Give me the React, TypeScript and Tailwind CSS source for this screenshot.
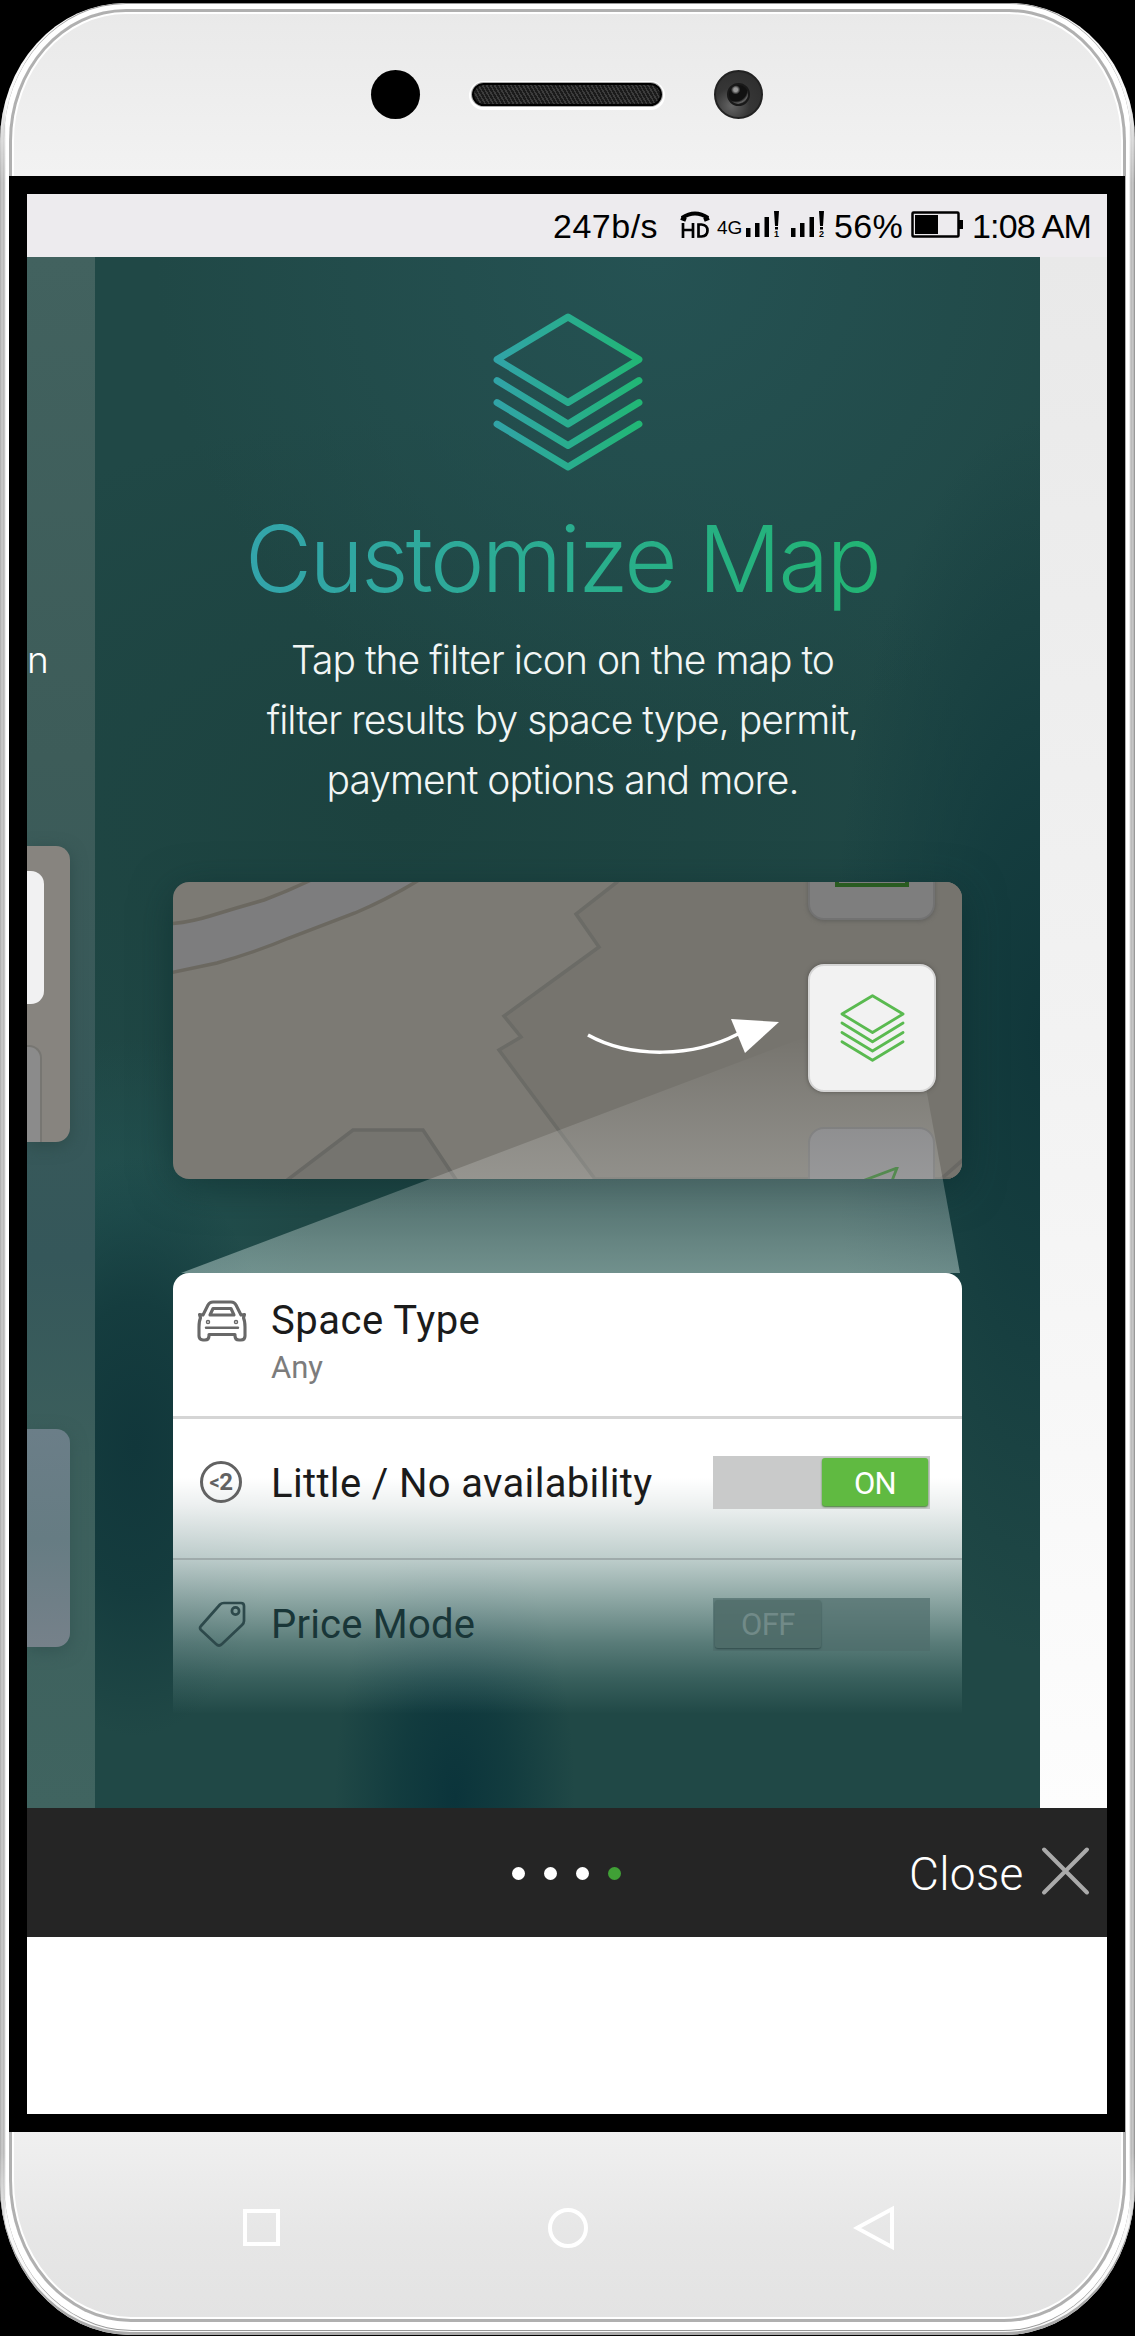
import React from "react";

function LayersIcon({ className, stroke, width }: { className: string; stroke: string; width: number }) {
  return (
    <svg className={className} viewBox="0 0 150 158" fill="none" stroke={stroke} strokeWidth={width} strokeLinecap="round" strokeLinejoin="round">
      <defs>
        <linearGradient id="layers" gradientUnits="userSpaceOnUse" x1="0" y1="0" x2="150" y2="0">
          <stop offset="0" stopColor="#31a3a8" />
          <stop offset="1" stopColor="#21b774" />
        </linearGradient>
      </defs>
      <path d="M75 4 146 46.500 75 89.500 4 46.500Z" />
      <path d="M4 67.500 75 111 146 67.500M4 89.500 75 132.500 146 89.500M4 111 75 154 146 111" />
    </svg>
  );
}

function CarIcon() {
  return (
    <svg className="h-[42px] w-[50px]" viewBox="0 0 50 42" fill="none" stroke="#686868" strokeWidth="3.100" strokeLinejoin="round" strokeLinecap="round">
      <path d="M6 15 11 5Q12.500 2 16 2H34Q37.500 2 39 5L44 15 47.500 14.500 46.500 18Q48 21 48 27V36Q48 40 44 40H42Q38 40 38 36V34.500H12V36Q12 40 8 40H6Q2 40 2 36V27Q2 21 3.500 18L2.500 14.500Z" />
      <path d="M13 15 16 8.500H34L37 15Z" />
      <path d="M9 27.800H41" strokeWidth="2.400" />
      <circle cx="11" cy="22" r=".7" />
      <circle cx="39" cy="22" r=".7" />
    </svg>
  );
}

function TagIcon() {
  return (
    <svg className="h-[46px] w-[48px]" viewBox="0 0 48 46" fill="none" stroke="#2d494b" strokeWidth="2.700" strokeLinejoin="round">
      <path d="M26 2H43Q46 2 46 5V20Q46 22 44 24L24 43Q21 46 18 43L3 29Q1 27 3 25L22 3.500Q23.500 2 26 2Z" />
      <circle cx="37.500" cy="10" r="3.600" />
    </svg>
  );
}

function Signal({ sim }: { sim: string }) {
  return (
    <span className="relative block h-[27px] w-[33px]">
      <svg className="h-[27px] w-[33px]" viewBox="0 0 33 27">
        <path d="M0 17h4.500v9H0zM9 12h4.500v14H9zM18.500 6H23v20h-4.500zM28 0h5l-1 15h-3zM29 16h3v2.500h-3z" />
      </svg>
      <span className="absolute -bottom-px left-[28px] text-[9px] leading-[9px] font-bold">{sim}</span>
    </span>
  );
}

function StatusBar() {
  return (
    <div className="flex h-[63px] items-start bg-[#edebee] pt-[17px] font-['Liberation_Sans'] text-[34px] leading-[31px] text-black">
      <span className="ml-[526px] w-[127px] tracking-[0.5px]">247b/s</span>
      <svg className="h-[27px] w-[30px]" viewBox="0 0 30 27" fill="none" stroke="#000" strokeWidth="3">
        <path d="M2 7Q15-2 28 7" strokeWidth="4" />
        <path d="M1 7l5 2M24 9l5-2" strokeWidth="4" />
        <path d="M3 12v15M13 12v15M3 19h10M18.500 13.500v12h3Q27.500 25 27.500 19.500T21.500 13.500Z" strokeWidth="2.700" />
      </svg>
      <span className="ml-[7px] w-[29px] text-[19px] leading-[33px]">4G</span>
      <Signal sim="1" />
      <span className="ml-[12px]"><Signal sim="2" /></span>
      <span className="ml-[10px] w-[77px] tracking-[0.4px]">56%</span>
      <svg className="h-[27px] w-[53px]" viewBox="0 0 53 27">
        <rect x="1.500" y="1.500" width="46" height="24" rx="1" fill="none" stroke="#000" strokeWidth="2.500" />
        <path d="M4 4h23v19H4zM48 9h4v9h-4z" />
      </svg>
      <span className="ml-[8px] whitespace-nowrap tracking-[-0.8px]">1:08 AM</span>
    </div>
  );
}

function MapCard() {
  return (
    <div className="relative mx-[78px] h-[297px] overflow-hidden rounded-[16px] bg-[#7c7a74]">
      <svg className="block h-[297px] w-[790px]" viewBox="0 0 790 297" fill="none" strokeWidth="3.500">
        <path d="M444 0 403 32 426 65 331 134 348 155 326 168 422 297H800V-4H448Z" fill="#76746e" stroke="#6b6b66" />
        <path d="M-4 42Q18 40 37 34Q63 26 91 18Q115 9 138-2H246Q215 17 182 31L116 56Q83 70 44 81Q20 86-4 91Z" fill="#7d7d7e" stroke="#6b6860" />
        <path d="M113 299 180 248H250L284 299Z" fill="#75746f" stroke="#686864" />
        <path d="M768 297 792 276" stroke="#696864" />
      </svg>
      <div className="absolute top-[-88px] left-[635px] h-[126px] w-[127px] rounded-[16px] border-2 border-[#727272] bg-[#7e7e7e] shadow-[0_1px_4px_#5f5f5c]" />
      <div className="absolute top-[-60px] left-[662px] h-[65px] w-[74px] border-[4px] border-[#295c21]" />
      <div className="absolute top-[245px] left-[635px] h-[126px] w-[127px] rounded-[16px] border-2 border-[#6d6d6d] bg-[#7e7e80]" />
      <svg className="absolute top-[285px] left-[682px] h-[24px] w-[44px]" viewBox="0 0 44 24" fill="none" stroke="#2a6e24" strokeWidth="2.800">
        <path d="M2 16 42 1 33 24" />
      </svg>
    </div>
  );
}

function Beam() {
  return (
    <svg className="absolute top-[779px] left-[86px] h-[237px] w-[780px]" viewBox="0 0 780 237">
      <defs>
        <linearGradient id="beam" x1="0" y1="0" x2="0" y2="1">
          <stop offset="0" stopColor="#fff" stopOpacity="0" />
          <stop offset=".6" stopColor="#f0f2f0" stopOpacity=".22" />
          <stop offset="1" stopColor="#e0f4ee" stopOpacity=".42" />
        </linearGradient>
      </defs>
      <path d="M0 237 627 0 741 30 779 237Z" fill="url(#beam)" />
    </svg>
  );
}

function HighlightedButton() {
  return (
    <div className="absolute top-[707px] left-[713px] flex h-[128px] w-[128px] items-center justify-center rounded-[16px] border-2 border-[#d5d5d5] bg-[#f2f2f2] shadow-[0_0_4px_#55534f]">
      <LayersIcon className="h-[68px] w-[65px]" stroke="#5aba50" width={6.5} />
    </div>
  );
}

function Arrow() {
  return (
    <svg className="absolute top-[757px] left-[491px] h-[48px] w-[196px]" viewBox="0 0 196 48">
      <path d="M2 21C45 45 108 43 152 20" fill="none" stroke="#fff" strokeWidth="3.500" />
      <path d="M145 5 193 8 159 39Z" fill="#fff" />
    </svg>
  );
}

function FilterPanel() {
  return (
    <div className="mx-[78px] mt-[94px] h-[441px] rounded-t-[16px] bg-[linear-gradient(180deg,#fff_0,#fff_205px,rgba(255,255,255,.92)_232px,rgba(240,248,246,.76)_285px,rgba(225,240,236,.54)_330px,rgba(190,215,210,.36)_370px,rgba(170,205,198,.18)_405px,transparent_441px)] font-['Roboto'] text-[40px] text-[#1b1b1b]">
      <div className="flex h-[146px] border-b-[3px] border-[#d5d5d5]">
        <div className="w-[98px] pt-[27px] pl-[24px]"><CarIcon /></div>
        <div className="pt-[25px]">
          <div className="leading-[46px] tracking-[0.500px]">Space Type</div>
          <div className="text-[31px] leading-[48px] text-[#7c7c7c]">Any</div>
        </div>
      </div>
      <div className="flex h-[141px] border-b-2 border-[#9fabab]">
        <div className="w-[98px] pt-[42px] pl-[27px]">
          <div className="flex h-[42px] w-[42px] items-center justify-center rounded-full border-3 border-[#626262] text-[24px] leading-none font-bold tracking-[-0.5px] text-[#626262]"><span className="text-[20px]">&lt;</span>2</div>
        </div>
        <div className="w-[442px] pt-[42px] leading-[46px] tracking-[0.350px]">Little / No availability</div>
        <div className="mt-[37px] flex h-[53px] w-[217px] justify-end bg-[#c9caca] p-[2px]">
          <div className="h-[48px] w-[106px] rounded-[3px] bg-[#60ba41] pt-[2px] text-center text-[31px] leading-[48px] tracking-[-0.8px] text-white shadow-[0_1px_2px_#417b30]">ON</div>
        </div>
      </div>
      <div className="flex h-[154px]">
        <div className="w-[98px] pt-[41px] pl-[25px]"><TagIcon /></div>
        <div className="w-[442px] pt-[42px] leading-[46px] tracking-[0.200px] text-[#193638]">Price Mode</div>
        <div className="mt-[38px] h-[53px] w-[217px] bg-[#4f6c6b]/70 p-[2px]">
          <div className="h-[48px] w-[106px] rounded-[3px] bg-[#4c6966]/60 text-center text-[31px] leading-[50px] tracking-[-0.6px] text-[#718a88] shadow-[0_1px_2px_#304b4b]">OFF</div>
        </div>
      </div>
    </div>
  );
}

function PreviousSlide() {
  return (
    <div className="flex w-[68px] flex-col bg-[linear-gradient(180deg,#42625f_0,#3d5c59_500px,#35575a_1000px,#3c5f5c_1200px,#406460_1551px)]">
      <div className="mt-[373px] h-[60px] font-['Inter'] text-[37px] leading-[60px] font-light tracking-[-1px] text-white">n</div>
      <div className="mt-[156px] h-[296px] w-[43px] overflow-hidden rounded-r-[14px] bg-[#87847f] pt-[25px] shadow-[0_4px_16px_#2e4c4b]">
        <div className="h-[133px] w-[17px] rounded-r-[13px] bg-[#f1f1f2]" />
        <div className="mt-[41px] h-[120px] w-[15px] rounded-tr-[13px] border-t-2 border-r-2 border-[#777672] bg-[#8b8b8b]" />
      </div>
      <div className="mt-[287px] h-[218px] w-[43px] rounded-r-[14px] bg-[linear-gradient(180deg,#6b7e88,#667c83_50%,#76818a)] shadow-[0_4px_16px_#345553]" />
    </div>
  );
}

function CurrentSlide() {
  return (
    <div className="relative w-[945px] overflow-hidden bg-[#204846] bg-[radial-gradient(ellipse_120px_280px_at_360px_1540px,#0b343b_0%,#0d373cbb_45%,transparent_100%),radial-gradient(ellipse_150px_290px_at_40px_1190px,#11373b_0%,#12393ccc_50%,transparent_100%),radial-gradient(ellipse_210px_620px_at_945px_780px,#10373a_0%,#11393cbb_40%,transparent_100%),radial-gradient(ellipse_190px_180px_at_30px_960px,#225150_0%,transparent_100%),radial-gradient(ellipse_500px_500px_at_560px_0px,#255253_0%,transparent_100%),radial-gradient(ellipse_600px_400px_at_300px_560px,#1c423f_0%,transparent_100%)]">
      <LayersIcon className="mx-auto mt-[56px] h-[158px] w-[150px]" stroke="url(#layers)" width={6.8} />
      <h1 className="mt-[28px] ml-[150px] w-fit bg-[linear-gradient(90deg,#33a4ab,#22b573)] bg-clip-text font-['Inter'] text-[92px] leading-[120px] font-light tracking-[-2.6px] whitespace-nowrap text-transparent">Customize Map</h1>
      <p className="mt-[11px] -ml-[10px] text-center font-['Inter'] text-[39px] leading-[60px] font-light tracking-[-0.96px] text-[#f2f6f5]">
        Tap the filter icon on the map to
        <br />
        filter results by space type, permit,
        <br />
        payment options and more.
      </p>
      <div className="mt-[72px]">
        <div className="rounded-[16px] [filter:drop-shadow(0_8px_20px_rgba(5,38,40,0.5))]"><MapCard /></div>
        <FilterPanel />
      </div>
      <Beam />
      <HighlightedButton />
      <Arrow />
    </div>
  );
}

function Screen() {
  return (
    <div className="h-[1956px] w-[1116px] bg-black p-[18px]">
      <div className="h-[1920px] w-[1080px] overflow-hidden bg-white">
        <StatusBar />
        <div className="flex h-[1551px] bg-[linear-gradient(180deg,#e9e9e9,#f2f2f2_50%,#fdfdfd)]">
          <PreviousSlide />
          <CurrentSlide />
        </div>
        <div className="flex h-[129px] items-center bg-[#252525]">
          <div className="ml-[485px] flex gap-[19px] pt-[2px]">
            <i className="h-[13px] w-[13px] rounded-full bg-white" />
            <i className="h-[13px] w-[13px] rounded-full bg-white" />
            <i className="h-[13px] w-[13px] rounded-full bg-white" />
            <i className="h-[13px] w-[13px] rounded-full bg-[#40a036]" />
          </div>
          <span className="ml-[288px] w-[132px] pt-[3px] font-['Roboto'] text-[46px] leading-[54px] font-light tracking-[0.3px] text-white">Close</span>
          <svg className="mb-[3px] h-[50px] w-[49px]" viewBox="0 0 48 48" fill="none" stroke="#aaa" strokeWidth="4" strokeLinecap="round">
            <path d="M3 3 45 45M45 3 3 45" />
          </svg>
        </div>
      </div>
    </div>
  );
}

function Sensors() {
  return (
    <div className="flex h-[160px] items-center pt-[5px] pl-[362px]">
      <div className="h-[49px] w-[49px] rounded-full bg-black" />
      <div className="ml-[52px] h-[23px] w-[190px] rounded-full border-2 border-black bg-[repeating-linear-gradient(60deg,#1b1b1b_0_2px,#3c3c3c_2px_3.500px)] shadow-[0_0_0_1px_#aaa,0_1px_0_3px_#fff]" />
      <div className="ml-[52px] flex h-[49px] w-[49px] items-center justify-center rounded-full border-2 border-[#222] bg-[radial-gradient(circle_at_35%_75%,#666,#363636_40%,#2b2b2b)]">
        <div className="h-[23px] w-[23px] rounded-full border-2 border-[#191919] bg-[radial-gradient(circle_at_35%_25%,#999_0_10%,#111_25%_60%,#666_72%,#111_85%)]" />
      </div>
    </div>
  );
}

export default function App() {
  return (
    <div className="h-[2336px] w-[1135px] bg-black pt-[3px]">
      <div className="relative h-[2332px] overflow-hidden rounded-t-[125px_138px] rounded-b-[130px_150px] bg-[#f9f9f9] shadow-[inset_0_-3px_0_#aaa]">
        <div className="relative mx-[4px] h-[2328px] rounded-t-[122px_136px] rounded-b-[128px_148px] border-y border-t-[#999] border-b-[#999] bg-white pt-px">
          <div className="relative mx-[5px] mt-[4px] h-[2313px] overflow-hidden rounded-t-[117px_132px] rounded-b-[122px_142px] bg-[linear-gradient(180deg,#e9e9e9_0,#f2f2f2_165px,#f0f0f0_2120px,#e6e6e6_2230px,#e3e3e3)] pt-[3px] shadow-[inset_0_0_0_3px_#b0b0b0,inset_0_0_0_5px_#fff]">
            <div className="h-[164px]"><Sensors /></div>
            <Screen />
            <div className="flex h-[187px] items-center pt-[4px]">
              <svg className="ml-[233px] h-[40px] w-[40px]" viewBox="0 0 40 40" fill="none" stroke="#fff" strokeWidth="4"><path d="M3 3h33v33H3z" /></svg>
              <svg className="ml-[266px] h-[40px] w-[40px]" viewBox="0 0 40 40" fill="none" stroke="#fff" strokeWidth="4"><circle cx="20" cy="20" r="18" /></svg>
              <svg className="ml-[265px] h-[46px] w-[42px]" viewBox="0 0 42 46" fill="none" stroke="#fff" strokeWidth="4"><path d="M4 23 39 4v38Z" /></svg>
            </div>
          </div>
        </div>
        <div className="absolute inset-x-0 top-[80px] h-[2170px] bg-[linear-gradient(90deg,#aaa_0,#ccc_2px,#b5b5b5_4px,#ddd_5px,transparent_6px,transparent_1129px,#ddd_1130px,#b5b5b5_1131px,#ccc_1133px,#888_1135px)] [mask-image:linear-gradient(180deg,transparent,#000_100px,#000_2070px,transparent)]" />
      </div>
    </div>
  );
}
